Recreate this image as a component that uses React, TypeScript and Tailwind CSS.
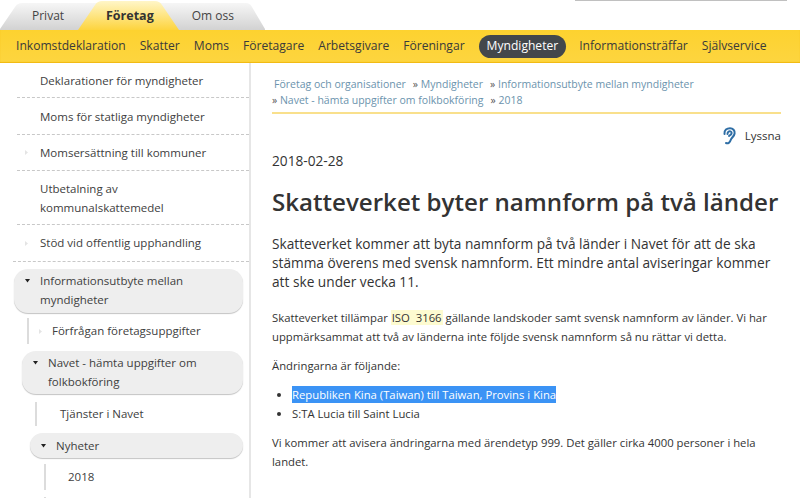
import React from "react";

function Tri({ dir = "right", light = false }: { dir?: "right" | "down"; light?: boolean }) {
  return (
    <svg width="7" height="7" viewBox="0 0 7 7" className="shrink-0">
      {dir === "right" ? (
        <path d="M2 1 L5 3.5 L2 6 Z" fill={light ? "#e4e4e4" : "#222"} />
      ) : (
        <path d="M1 2 L6 2 L3.5 5.5 Z" fill="#222" />
      )}
    </svg>
  );
}

function Item({ children, tri = false, h = "h-[36px]" }: { children: React.ReactNode; tri?: boolean; h?: string }) {
  return (
    <div className={`ml-[17px] flex items-center border-b border-dashed border-[#c8c8c8] ${h}`}>
      <div className="flex w-[23px] shrink-0 justify-start pl-[6px]">{tri && <Tri light />}</div>
      <div className="leading-[19px]">{children}</div>
    </div>
  );
}

function Open({ children, cls, gutter }: { children: React.ReactNode; cls: string; gutter: string }) {
  return (
    <div className={`flex rounded-[14px] bg-[#eeeeee] shadow-[0_1px_1px_#c4c4c4] ${cls}`}>
      <div className={`flex h-[19px] shrink-0 items-center ${gutter}`}>
        <Tri dir="down" />
      </div>
      <div className="leading-[19px]">{children}</div>
    </div>
  );
}

export default function App() {
  return (
    <div
      className="h-[498px] w-[800px] overflow-hidden bg-white text-[#333]"
      style={{ fontFamily: '"Open Sans", sans-serif' }}
    >
      <header className="relative h-[30px]">
        <svg width="270" height="31" viewBox="0 0 270 31" className="absolute left-0 top-0">
          <defs>
            <linearGradient id="grey" x1="0" y1="0" x2="0" y2="1">
              <stop offset="0" stopColor="#f6f6f6" />
              <stop offset="1" stopColor="#d2d2d2" />
            </linearGradient>
            <linearGradient id="yel" x1="0" y1="0" x2="0" y2="1">
              <stop offset="0" stopColor="#fff6c8" />
              <stop offset="1" stopColor="#fdd43e" />
            </linearGradient>
          </defs>
          <path d="M0 29 L15 7 C17 4 19 3 22 3 H110 V30 H0 Z" fill="url(#grey)" />
          <path d="M160 30 V3 H246 C249 3 250 4 252 7 L265 29 V30 Z" fill="url(#grey)" />
          <path d="M78 30 L95 5 C97 2 99 1 102 1 H155 C158 1 160 2 162 5 L179 30 Z" fill="url(#yel)" />
        </svg>
        <nav className="relative flex h-[32px] items-center text-[12px]">
          <span className="ml-[32px] w-[74px] text-[#444]">Privat</span>
          <span className="text-[12.5px] font-bold text-[#333]">Företag</span>
          <span className="ml-[38px] text-[#444]">Om oss</span>
        </nav>
        <div className="absolute left-[575px] top-0 h-px w-[212px] bg-[#c0c0c0]" />
      </header>

      <nav className="flex h-[33px] items-center bg-gradient-to-b from-[#fdd22f] to-[#fdd53f] pl-[16px] text-[12.1px] text-[#3a3a3a] shadow-[inset_0_-1px_1px_#f1b80f]">
        <span>Inkomstdeklaration</span>
        <span className="ml-[14px]">Skatter</span>
        <span className="ml-[14px]">Moms</span>
        <span className="ml-[14px]">Företagare</span>
        <span className="ml-[14px]">Arbetsgivare</span>
        <span className="ml-[14px]">Föreningar</span>
        <span className="ml-[14px] flex h-[23px] items-center rounded-[12px] bg-[#43474b] px-[8px] text-white">Myndigheter</span>
        <span className="ml-[13px]">Informationsträffar</span>
        <span className="ml-[14px]">Självservice</span>
      </nav>

      <div className="flex">
        <aside className="h-[435px] w-[251px] shrink-0 overflow-hidden border-r-2 border-[#e6e6e6] text-[11.5px] text-[#404040]">
          <Item h="h-[35px]">Deklarationer för myndigheter</Item>
          <Item h="h-[37px]">Moms för statliga myndigheter</Item>
          <Item tri>Momsersättning till kommuner</Item>
          <Item h="h-[54px]">Utbetalning av<br />kommunalskattemedel</Item>
          <div className="ml-[13px] flex h-[37px] items-center border-b border-dashed border-[#c8c8c8]">
            <div className="w-[27px] shrink-0 pl-[10px]"><Tri light /></div>
            <div>Stöd vid offentlig upphandling</div>
          </div>
          <Open cls="ml-[14px] mr-[6px] mt-[7px] h-[44px] pt-[2px]" gutter="w-[26px] pl-[10px]">
            Informationsutbyte mellan<br />myndigheter
          </Open>
          <div className="ml-[27px] mt-[5px] flex h-[26px] items-center border-l-2 border-[#dcdcdc]">
            <div className="w-[23px] shrink-0 pl-[8px]"><Tri light /></div>
            <div>Förfrågan företagsuppgifter</div>
          </div>
          <Open cls="ml-[22px] mr-[6px] mt-[7px] h-[43px] pt-[2px]" gutter="w-[26px] pl-[10px]">
            Navet - hämta uppgifter om<br />folkbokföring
          </Open>
          <div className="ml-[35px] mt-[8px] flex h-[24px] items-center border-l-2 border-[#dcdcdc] pl-[23px]">Tjänster i Navet</div>
          <Open cls="ml-[30px] mr-[6px] mt-[7px] h-[25px] items-center" gutter="w-[26px] pl-[10px]">Nyheter</Open>
          <div className="ml-[44px] mt-[6px] flex h-[26px] items-center border-l-2 border-[#dcdcdc] pl-[22px]">2018</div>
          <div className="ml-[44px] mt-[7px] h-[20px] border-l-2 border-[#dcdcdc]" />
        </aside>

        <main className="ml-[21px] w-[509px] pt-[13px]">
          <div className="border-b-2 border-[#f9e08c] pb-[4px] text-[10.5px] leading-[16px] text-[#6b93ad]">
            <div className="pl-[2px]">
              <span>Företag och organisationer</span>
              <span className="ml-[7px] text-[#555]">»</span> <span>Myndigheter</span>
              <span className="ml-[7px] text-[#555]">»</span> <span>Informationsutbyte mellan myndigheter</span>
            </div>
            <div>
              <span className="text-[#555]">»</span> <span>Navet - hämta uppgifter om folkbokföring</span>
              <span className="ml-[7px] text-[#555]">»</span> <span>2018</span>
            </div>
          </div>

          <div className="mt-[13px] flex items-center justify-end gap-[9px] text-[11.5px] leading-[18px]">
            <svg width="14" height="18" viewBox="0 0 14 18" fill="none" stroke="#2f6ea5" strokeWidth="2" strokeLinecap="round">
              <path d="M2.5 7 C2 3 5 1.2 8 1.2 C11 1.2 13 3.5 12.6 6.5 C12.2 9.5 9.5 10.5 8.7 13 C8 15.6 6 17 4 16" />
              <path d="M5.5 7 C5.5 5 7 4 8.5 4.4 C10 4.9 10 6.8 8.5 7.8 L7 9" />
            </svg>
            <span>Lyssna</span>
          </div>

          <div className="mt-[7px] text-[13.7px] leading-[18px]">2018-02-28</div>

          <h1 className="mt-[16px] whitespace-nowrap text-[24.1px] font-semibold leading-[32px]">Skatteverket byter namnform på två länder</h1>

          <p className="mt-[16px] text-[13.7px] leading-[19px]">
            Skatteverket kommer att byta namnform på två länder i Navet för att de ska<br />
            stämma överens med svensk namnform. Ett mindre antal aviseringar kommer<br />
            att ske under vecka 11.
          </p>

          <p className="mt-[17px] text-[11.3px] leading-[19px]">
            Skatteverket tillämpar <span className="bg-[#fdfbd0] px-[1px]">ISO&nbsp;&nbsp;3166</span> gällande landskoder samt svensk namnform av länder. Vi har<br />
            uppmärksammat att två av länderna inte följde svensk namnform så nu rättar vi detta.
          </p>

          <p className="mt-[10px] text-[11.3px] leading-[19px]">Ändringarna är följande:</p>

          <ul className="mt-[10px] list-disc pl-[20px] text-[11.3px] leading-[19px]">
            <li><span className="bg-[#3b93f5] py-[1px] text-white">Republiken Kina (Taiwan) till Taiwan, Provins i Kina</span></li>
            <li>S:TA Lucia till Saint Lucia</li>
          </ul>

          <p className="mt-[10px] text-[11.3px] leading-[19px]">
            Vi kommer att avisera ändringarna med ärendetyp 999. Det gäller cirka 4000 personer i hela<br />
            landet.
          </p>
        </main>
      </div>
    </div>
  );
}
